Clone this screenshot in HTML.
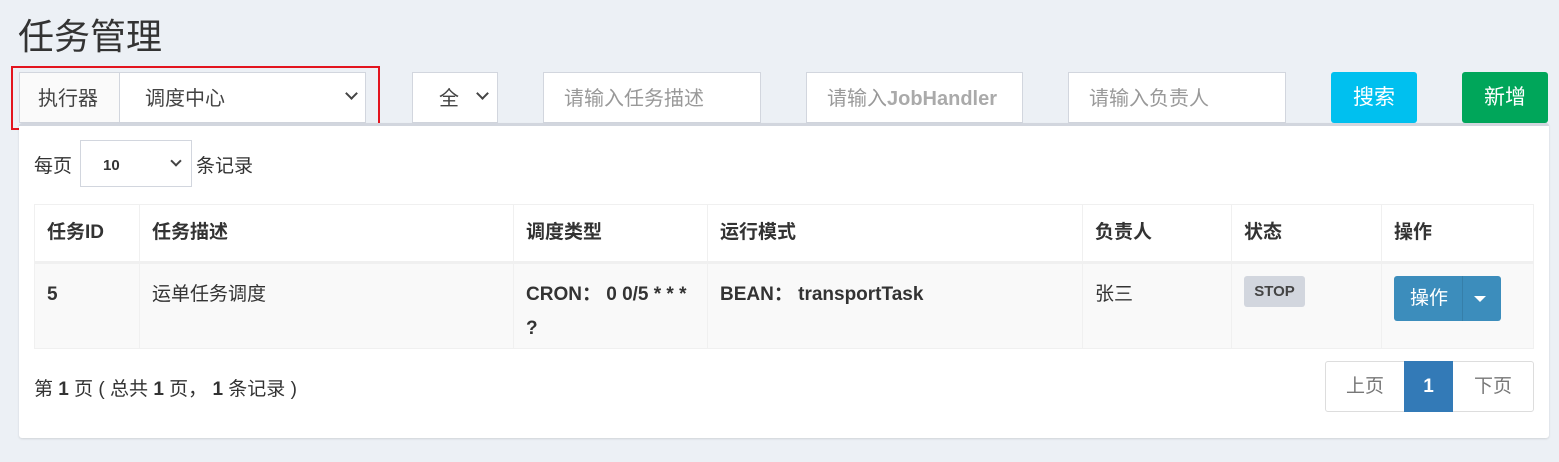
<!DOCTYPE html>
<html><head><meta charset="utf-8"><style>
*{box-sizing:border-box;margin:0;padding:0}
body{width:1559px;height:462px;background:#ecf0f5;font-family:"Liberation Sans","Noto Sans CJK SC",sans-serif;color:#333;position:relative;overflow:hidden;font-size:19px}
.a{position:absolute}
.inp{position:absolute;top:72px;height:51px;background:#fff;border:1px solid #d2d6de;line-height:52px;color:#999;padding-left:20px;font-size:20px}
.chev{position:absolute;width:9px;height:9px;border-right:2px solid #444;border-bottom:2px solid #444;transform:rotate(45deg)}
.btn{position:absolute;top:72px;height:51px;border-radius:3px;color:#fff;text-align:center;line-height:51px;font-size:21px}
table{position:absolute;left:34px;top:204px;width:1500px;border-collapse:collapse;font-size:19px}
td,th{border:1px solid #f0f0f0;text-align:left;vertical-align:top;padding:0 12px}
th{height:56px;line-height:56px;font-weight:bold;border-bottom:3px solid #f0f0f0}
td{height:86px;background:#f9f9f9;padding-top:14px;line-height:34px}
</style></head><body>
<div class="a" style="left:18px;top:8px;font-size:36px;color:#333">任务管理</div>
<div class="a" style="left:11px;top:66px;width:369px;height:64px;border:2px solid #e3141e"></div>
<div class="inp" style="left:19px;width:101px;color:#444;background:#fafafa;padding-left:18px">执行器</div>
<div class="inp" style="left:119px;width:247px;color:#444;padding-left:25px">调度中心</div>
<div class="chev" style="left:347px;top:89px"></div>
<div class="inp" style="left:412px;width:86px;color:#444;padding-left:26px">全</div>
<div class="chev" style="left:478px;top:89px"></div>
<div class="inp" style="left:543px;width:218px">请输入任务描述</div>
<div class="inp" style="left:806px;width:217px">请输入<b style="color:#aaa">JobHandler</b></div>
<div class="inp" style="left:1068px;width:218px">请输入负责人</div>
<div class="btn" style="left:1331px;width:86px;background:#00c0ef">搜索</div>
<div class="btn" style="left:1462px;width:86px;background:#00a65a">新增</div>
<div class="a" style="left:19px;top:123px;width:1530px;height:315px;background:#fff;border-top:3px solid #d2d6de;border-radius:3px;box-shadow:0 1px 2px rgba(0,0,0,.12)"></div>
<div class="a" style="left:34px;top:151px">每页</div>
<div class="a" style="left:80px;top:140px;width:112px;height:47px;border:1px solid #d2d6de;font-size:15px;font-weight:bold;line-height:49px;padding-left:22px">10</div>
<div class="chev" style="left:172px;top:157px;width:8px;height:8px"></div>
<div class="a" style="left:196px;top:151px">条记录</div>
<table>
<tr><th style="width:105px">任务ID</th><th style="width:374px">任务描述</th><th style="width:194px">调度类型</th><th style="width:375px">运行模式</th><th style="width:149px">负责人</th><th style="width:150px">状态</th><th>操作</th></tr>
<tr><td><b>5</b></td><td>运单任务调度</td><td><b>CRON： 0 0/5 * * *<br>?</b></td><td><b>BEAN： transportTask</b></td><td>张三</td><td></td><td></td></tr>
</table>
<div class="a" style="left:1244px;top:276px;width:61px;height:31px;background:#d2d6de;border-radius:3px;font-size:15px;font-weight:bold;color:#444;text-align:center;line-height:31px">STOP</div>
<div class="a" style="left:1394px;top:276px;width:107px;height:45px;background:#3c8dbc;border-radius:3px;color:#fff;line-height:45px;font-size:19px"><span style="position:absolute;left:16px">操作</span><span style="position:absolute;left:68px;top:0;width:1px;height:45px;background:#367fa9"></span><span style="position:absolute;left:80px;top:20px;border-left:6px solid transparent;border-right:6px solid transparent;border-top:6px solid #fff"></span></div>
<div class="a" style="left:34px;top:374px">第 <b>1</b> 页 ( 总共 <b>1</b> 页， <b>1</b> 条记录 )</div>
<div class="a" style="left:1325px;top:361px;width:209px;height:51px;border:1px solid #ddd;border-radius:3px;background:#fff"></div>
<div class="a" style="left:1326px;top:361px;width:78px;height:51px;line-height:51px;text-align:center;color:#777">上页</div>
<div class="a" style="left:1404px;top:361px;width:49px;height:51px;line-height:51px;text-align:center;background:#337ab7;color:#fff;font-weight:bold">1</div>
<div class="a" style="left:1453px;top:361px;width:80px;height:51px;line-height:51px;text-align:center;color:#777">下页</div>
</body></html>
